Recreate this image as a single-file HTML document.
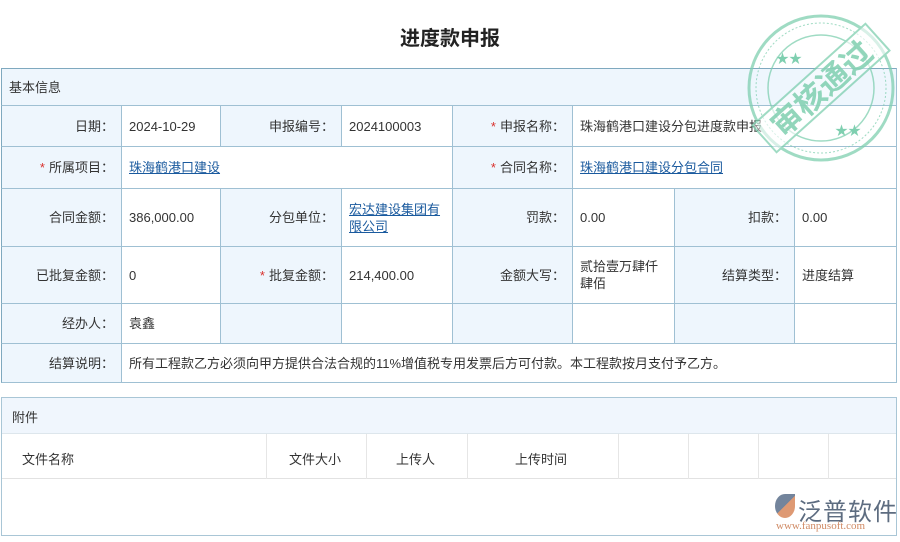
<!DOCTYPE html>
<html><head><meta charset="utf-8"><style>
*{margin:0;padding:0;box-sizing:border-box}
body{width:900px;height:542px;background:#fff;font-family:"Liberation Sans","Noto Sans CJK SC",sans-serif;font-size:13px;color:#333;position:relative;overflow:hidden}
.t{position:absolute;top:22px;left:0;width:900px;text-align:center;font-size:20px;font-weight:bold;color:#222}
.c{position:absolute;border-right:1px solid #9fc0d3;border-bottom:1px solid #9fc0d3;display:flex;align-items:center;padding:0 7px;line-height:17px}
.l{background:#eef6fd;justify-content:flex-end}
.w{background:#fff}
a{color:#1a5a9e;text-decoration:underline}
.r{color:#d9302c;margin-right:4px}
.box{position:absolute;border:1px solid #8db4c8}
</style></head><body>
<div class="t">进度款申报</div>
<div class="box" style="left:1px;top:68px;width:896px;height:315px;border-color:#7fa9bf"></div>
<div class="c" style="left:1px;top:68px;width:896px;height:38px;background:#eef6fd;border-top:1px solid #7fa9bf;border-left:1px solid #7fa9bf">基本信息</div>
<div id="g"></div>
<div class="box" style="left:1px;top:397px;width:896px;height:139px;border-color:#a9c6d6"></div>
<div style="position:absolute;left:2px;top:398px;width:894px;height:36px;background:#f0f6fd;border-bottom:1px solid #dde6ec;padding:9px 10px">附件</div>
<div style="position:absolute;left:2px;top:434px;width:894px;height:45px;border-bottom:1px solid #e2e2e2"></div>
<div style="position:absolute;top:449px;left:22px">文件名称</div>
<div style="position:absolute;top:449px;left:289px">文件大小</div>
<div style="position:absolute;top:449px;left:396px">上传人</div>
<div style="position:absolute;top:449px;left:515px">上传时间</div>
<div style="position:absolute;top:434px;left:266px;width:1px;height:45px;background:#e6e6e6"></div>
<div style="position:absolute;top:434px;left:366px;width:1px;height:45px;background:#e6e6e6"></div>
<div style="position:absolute;top:434px;left:467px;width:1px;height:45px;background:#e6e6e6"></div>
<div style="position:absolute;top:434px;left:618px;width:1px;height:45px;background:#e6e6e6"></div>
<div style="position:absolute;top:434px;left:688px;width:1px;height:45px;background:#e6e6e6"></div>
<div style="position:absolute;top:434px;left:758px;width:1px;height:45px;background:#e6e6e6"></div>
<div style="position:absolute;top:434px;left:828px;width:1px;height:45px;background:#e6e6e6"></div>
<div style="position:absolute;left:775px;top:494px;width:20px;height:24px;background:linear-gradient(135deg,#5a6f8a 50%,#d8875a 50%);border-radius:50% 0 50% 50%;opacity:.85"></div>
<div style="position:absolute;left:798px;top:492px;font-size:24px;color:#5d6c80;letter-spacing:1px">泛普软件</div>
<div style="position:absolute;left:776px;top:520px;font-size:11px;color:#d08a64;font-family:'Liberation Serif',serif">www.fanpusoft.com</div>
<script>
const cells=[
[106,41,[[1,122,'l','日期：'],[122,221,'w','2024-10-29'],[221,342,'l','申报编号：'],[342,453,'w','2024100003'],[453,573,'l','<span class=r>*</span>申报名称：'],[573,897,'w','珠海鹤港口建设分包进度款申报']]],
[147,42,[[1,122,'l','<span class=r>*</span>所属项目：'],[122,453,'w','<a>珠海鹤港口建设</a>'],[453,573,'l','<span class=r>*</span>合同名称：'],[573,897,'w','<a>珠海鹤港口建设分包合同</a>']]],
[189,58,[[1,122,'l','合同金额：'],[122,221,'w','386,000.00'],[221,342,'l','分包单位：'],[342,453,'w','<a>宏达建设集团有限公司</a>'],[453,573,'l','罚款：'],[573,675,'w','0.00'],[675,795,'l','扣款：'],[795,897,'w','0.00']]],
[247,57,[[1,122,'l','已批复金额：'],[122,221,'w','0'],[221,342,'l','<span class=r>*</span>批复金额：'],[342,453,'w','214,400.00'],[453,573,'l','金额大写：'],[573,675,'w','贰拾壹万肆仟肆佰'],[675,795,'l','结算类型：'],[795,897,'w','进度结算']]],
[304,40,[[1,122,'l','经办人：'],[122,221,'w','袁鑫'],[221,342,'l',''],[342,453,'w',''],[453,573,'l',''],[573,675,'w',''],[675,795,'l',''],[795,897,'w','']]],
[344,39,[[1,122,'l','结算说明：'],[122,897,'w','所有工程款乙方必须向甲方提供合法合规的11%增值税专用发票后方可付款。本工程款按月支付予乙方。']]]];
let h='';for(const[t,hh,cs]of cells)for(const[a,b,k,x]of cs)h+=`<div class="c ${k}" style="left:${a}px;top:${t}px;width:${b-a}px;height:${hh}px;${a==1?'border-left:1px solid #7fa9bf;':''}">${x}</div>`;
document.getElementById('g').outerHTML=h;
</script>
<svg style="position:absolute;left:743px;top:13px" width="157" height="152" viewBox="0 0 157 152">
<g fill="none" stroke="#7fcfb0" opacity=".75">
<circle cx="78" cy="75" r="72" stroke-width="3"/>
<circle cx="78" cy="75" r="65" stroke-width="1" stroke-dasharray="2 2"/>
<circle cx="78" cy="75" r="53" stroke-width="1.5"/>
<g transform="rotate(-42 78 75)"><rect x="2" y="57" width="152" height="36" fill="#fff" fill-opacity=".6" stroke-width="2"/></g>
</g>
<g transform="rotate(-42 78 75)"><text x="78" y="87" text-anchor="middle" font-size="31" font-weight="bold" fill="#7fcfb0" opacity=".85" font-family="Noto Sans CJK SC,sans-serif">审核通过</text></g>
<text x="33" y="50" fill="#7fcfb0" font-size="13">★★</text>
<text x="92" y="122" fill="#7fcfb0" font-size="13">★★</text>
</svg>
</body></html>
